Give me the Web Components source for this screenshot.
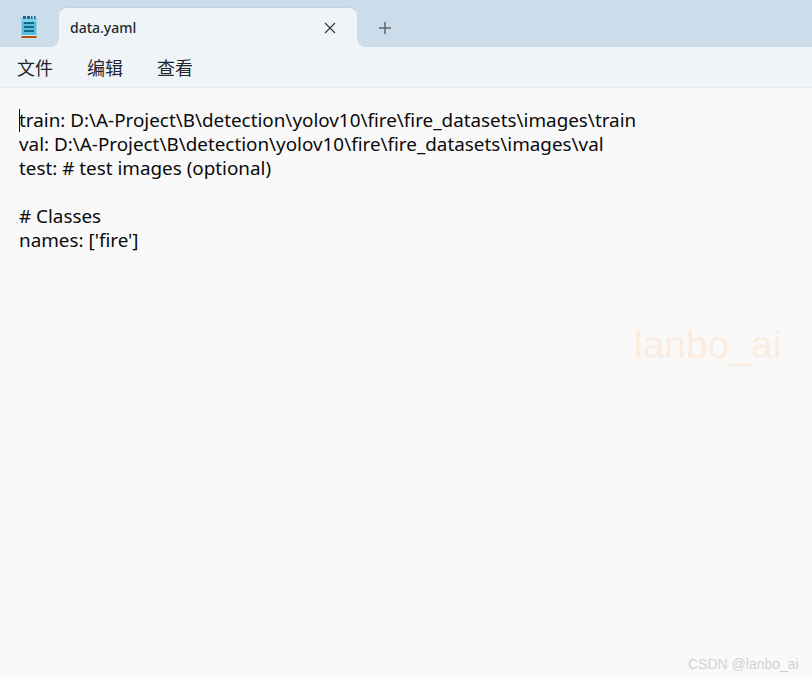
<!DOCTYPE html>
<html>
<head>
<meta charset="utf-8">
<style>
  html, body { margin: 0; height: 100%; background: #f9f9f9; }
  body { font-family: "Noto Sans", "Noto Sans CJK SC", sans-serif; overflow: hidden; }
</style>
</head>
<body>
<x-notepad>
  <x-tabbar slot="tabs" title-text="data.yaml"></x-tabbar>
  <x-menubar slot="menu">
    <x-menu-item>文件</x-menu-item>
    <x-menu-item>编辑</x-menu-item>
    <x-menu-item>查看</x-menu-item>
  </x-menubar>
  <x-editor>train: D:\A-Project\B\detection\yolov10\fire\fire_datasets\images\train
val: D:\A-Project\B\detection\yolov10\fire\fire_datasets\images\val
test: # test images (optional)

# Classes
names: ['fire']</x-editor>
</x-notepad>

<script>
class Notepad extends HTMLElement {
  constructor() {
    super();
    this.attachShadow({mode: 'open'});
    this.shadowRoot.innerHTML = `
      <style>
        :host { display: flex; flex-direction: column; width: 812px; height: 679px; position: relative; }
        .mark {
          position: absolute; left: 634px; top: 321px;
          font: 39px/48px "Liberation Sans", sans-serif; color: #fcecdf;
        }
        .csdn {
          position: absolute; left: 688px; top: 655px;
          font: 14px/18px "Liberation Sans", sans-serif; color: #d2d2d2;
        }
      </style>
      <slot name="tabs"></slot>
      <slot name="menu"></slot>
      <slot></slot>
      <div class="mark">lanbo_ai</div>
      <div class="csdn">CSDN @lanbo_ai</div>
    `;
  }
}

class Tabbar extends HTMLElement {
  constructor() {
    super();
    this.attachShadow({mode: 'open'});
    this.shadowRoot.innerHTML = `
      <style>
        :host { display: flex; height: 47px; background: #cbdcea; align-items: flex-end; flex: none; }
        .app { width: 59px; height: 47px; display: flex; align-items: center; justify-content: center; flex: none; padding-top: 6px; box-sizing: border-box; padding-right: 1px; }
        .tab {
          width: 298px; height: 39px; background: #eff4f9; border-radius: 8px 8px 0 0;
          display: flex; align-items: center; box-sizing: border-box; padding: 0 21px 0 11px;
          position: relative; flex: none;
          box-shadow: 0 -1px 0 #c3d4e2;
        }
        .tab::before, .tab::after {
          content: ""; position: absolute; bottom: 0; width: 8px; height: 8px;
        }
        .tab::before { left: -8px; background: radial-gradient(circle at 0 0, #cbdcea 7.5px, #eff4f9 8px); }
        .tab::after { right: -8px; background: radial-gradient(circle at 100% 0, #cbdcea 7.5px, #eff4f9 8px); }
        .name { flex: 1; font: 500 14px/20px "Noto Sans", sans-serif; color: #24282d; margin-top: 1px; }
        .close { width: 12px; height: 12px; display: block; margin-top: 1px; }
        .add { width: 14px; height: 14px; margin: 0 0 12px 21px; display: block; }
      </style>
      <div class="app">
        <svg width="16" height="22" viewBox="0 0 16 22">
          <rect x="0.5" y="2" width="15" height="17" fill="#57bfdc"/>
          <rect x="0.5" y="2" width="15" height="4" fill="#7ed3e8"/>
          <rect x="2" y="0" width="3" height="3" fill="#17688f"/>
          <rect x="6" y="0" width="3" height="3" fill="#17688f"/>
          <rect x="10" y="0" width="1.5" height="3" fill="#17688f"/>
          <rect x="13" y="0" width="1.5" height="3" fill="#17688f"/>
          <rect x="3" y="6" width="10" height="2" fill="#17688f"/>
          <rect x="3" y="10" width="10" height="2" fill="#17688f"/>
          <rect x="3" y="14" width="10" height="2" fill="#17688f"/>
          <rect x="0.5" y="19" width="15" height="1" fill="#e5e5e5"/>
          <rect x="0.5" y="20" width="15" height="2" fill="#b3500f"/>
        </svg>
      </div>
      <div class="tab">
        <span class="name"></span>
        <svg class="close" viewBox="0 0 12 12"><path d="M1 1 11 11M11 1 1 11" stroke="#2d3237" stroke-width="1.1" fill="none"/></svg>
      </div>
      <svg class="add" viewBox="0 0 14 14"><path d="M7 1V13M1 7H13" stroke="#5f666d" stroke-width="1.5" fill="none"/></svg>
    `;
    this.shadowRoot.querySelector('.name').textContent = this.getAttribute('title-text');
  }
}

class Menubar extends HTMLElement {
  constructor() {
    super();
    this.attachShadow({mode: 'open'});
    this.shadowRoot.innerHTML = `
      <style>
        :host {
          display: flex; height: 41px; box-sizing: border-box; flex: none; gap: 34px;
          background: #eff4f9; border-bottom: 1px solid #e9e9e9;
          padding: 0 0 0 17px; align-items: center;
        }
      </style>
      <slot></slot>
    `;
  }
}

class MenuItem extends HTMLElement {
  constructor() {
    super();
    this.attachShadow({mode: 'open'});
    this.shadowRoot.innerHTML = `
      <style>
        :host { display: block; font: 18px/24px "Noto Sans CJK SC", sans-serif; color: #22262a; }
      </style>
      <slot></slot>
    `;
  }
}

class Editor extends HTMLElement {
  constructor() {
    super();
    this.attachShadow({mode: 'open'});
    this.shadowRoot.innerHTML = `
      <style>
        :host {
          display: block; flex: 1; background: #f9f9f9; color: #0b0b0b;
          padding: 20px 0 0 19px; position: relative;
          font: 18.85px/24px "Noto Sans", sans-serif;
        }
        .text { white-space: pre; }
        .caret { position: absolute; left: 19px; top: 21px; width: 1px; height: 23px; background: #111; }
      </style>
      <div class="caret"></div>
      <div class="text"><slot></slot></div>
    `;
  }
}

customElements.define('x-notepad', Notepad);
customElements.define('x-tabbar', Tabbar);
customElements.define('x-menubar', Menubar);
customElements.define('x-menu-item', MenuItem);
customElements.define('x-editor', Editor);
</script>
</body>
</html>
